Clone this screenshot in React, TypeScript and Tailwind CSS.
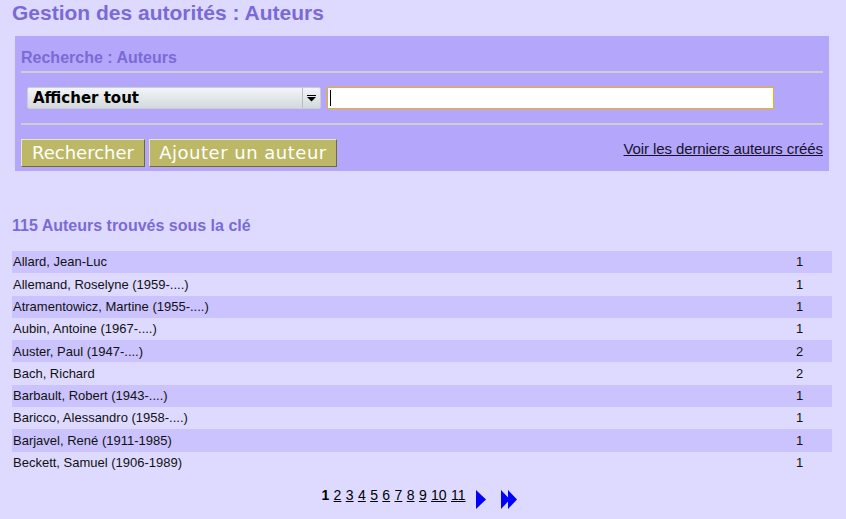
import React from "react";

const rows: [string, string][] = [
  ["Allard, Jean-Luc", "1"],
  ["Allemand, Roselyne (1959-....)", "1"],
  ["Atramentowicz, Martine (1955-....)", "1"],
  ["Aubin, Antoine (1967-....)", "1"],
  ["Auster, Paul (1947-....)", "2"],
  ["Bach, Richard", "2"],
  ["Barbault, Robert (1943-....)", "1"],
  ["Baricco, Alessandro (1958-....)", "1"],
  ["Barjavel, René (1911-1985)", "1"],
  ["Beckett, Samuel (1906-1989)", "1"],
];

export default function App() {
  const sans = { fontFamily: '"Liberation Sans", Arial, sans-serif' };
  const deja = { fontFamily: '"DejaVu Sans", Verdana, sans-serif' };
  const btn =
    "h-[28px] bg-[#bcb866] text-white text-[18px] leading-[24px] text-center border border-t-[#e8e6c8] border-l-[#e8e6c8] border-b-[#6e6b3a] border-r-[#6e6b3a]";
  return (
    <div className="w-[846px] h-[519px] bg-[#dedaff] overflow-hidden" style={sans}>
      <div className="pl-3 pr-[14px]">
        <h1 className="text-[21px] leading-[24px] mt-[1px] font-bold text-[#7b6ad6]">
          Gestion des autorités : Auteurs
        </h1>
        <div className="mx-[3px] mt-[11px] h-[135px] bg-[#b4a7fb] px-[6px] pt-[13px]">
          <div className="text-[16px] leading-[18px] font-bold text-[#7b6ad6]">Recherche : Auteurs</div>
          <div className="mt-[4px] h-[2px] bg-[#cfcfd2]" />
          <div className="flex items-center mt-[14px] pl-[6px] gap-[6px]">
            <div className="w-[294px] h-[22px] flex border border-[#c9ced3] rounded-[2px] bg-gradient-to-b from-[#f3f5f6] to-[#d3d9dd]">
              <div className="flex-1 pl-[5px] text-[15px] leading-[20px] font-bold text-black" style={deja}>
                Afficher tout
              </div>
              <div className="w-[18px] border-l border-[#b8bec4] flex items-center justify-center">
                <svg width="9" height="8" viewBox="0 0 9 8">
                  <rect x="0" y="1" width="9" height="1" fill="#000" />
                  <polygon points="0,3 9,3 4.5,7.5" fill="#000" />
                </svg>
              </div>
            </div>
            <div className="w-[447px] h-[22px] bg-white border border-[#f0b400] flex items-center pl-[2px]">
              <div className="w-[1px] h-[16px] bg-black" />
            </div>
          </div>
          <div className="mt-[14px] h-[2px] bg-[#cfcfd2]" />
          <div className="flex items-end justify-between mt-[14px]">
            <div className="flex gap-[4px]">
              <button className={`${btn} w-[124px]`} style={deja}>
                Rechercher
              </button>
              <button className={`${btn} w-[188px] tracking-[0.5px]`} style={deja}>
                Ajouter un auteur
              </button>
            </div>
            <a className="text-[15px] leading-[17px] text-[#16122e] underline mb-[10px] tracking-[-0.1px]">
              Voir les derniers auteurs créés
            </a>
          </div>
        </div>
        <div className="mt-[46px] text-[16px] leading-[18px] font-bold text-[#7b6ad6]">
          115 Auteurs trouvés sous la clé
        </div>
        <div className="mt-[16px]">
          {rows.map(([name, n], i) => (
            <div
              key={i}
              className={`flex h-[22.3px] items-center text-[13px] text-[#111] ${i % 2 === 0 ? "bg-[#cbc3fd]" : ""}`}
            >
              <div className="flex-1 pl-[1px]">{name}</div>
              <div className="w-[36px]">{n}</div>
            </div>
          ))}
        </div>
        <div className="flex items-start justify-center mt-[13px] text-[14px] leading-[16px] text-black">
          <div className="flex items-start mr-[5px]">
            <span className="whitespace-pre [word-spacing:0.5px]">
              <b>1</b>
              {["2", "3", "4", "5", "6", "7", "8", "9", "10", "11"].map((p) => (
                <React.Fragment key={p}>
                  {" "}
                  <a className="underline">{p}</a>
                </React.Fragment>
              ))}
            </span>
            <svg width="11" height="20" viewBox="0 0 11 20" className="ml-[10px] mt-[3px]">
              <polygon points="0,0 10,9.5 0,19" fill="#0000ff" />
            </svg>
            <svg width="17" height="20" viewBox="0 0 17 20" className="ml-[14px] mt-[3px]">
              <polygon points="0,0 9,9.5 0,19" fill="#0000ff" />
              <polygon points="7,0 16,9.5 7,19" fill="#0000ff" />
            </svg>
          </div>
        </div>
      </div>
    </div>
  );
}
